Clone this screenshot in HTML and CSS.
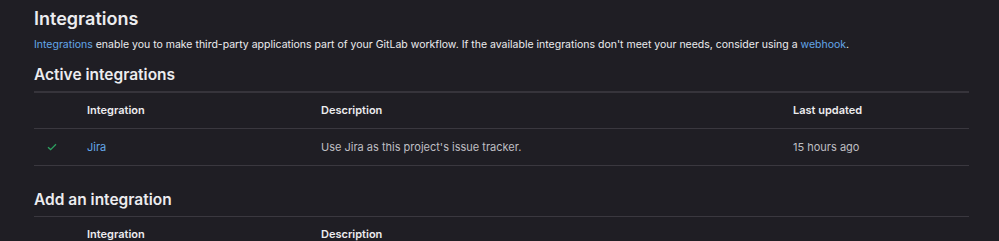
FILE: index.html
```html
<html>
<head>
    <title>Integrations</title>
    <link rel="stylesheet" href="styles.css">
</head>
<body>
    <h1 class="page-title">Integrations</h1>
    <p class="intro"><a href="#">Integrations</a> enable you to make third-party applications part of your GitLab workflow. If the available integrations don't meet your needs, consider using a <a href="#">webhook</a>.</p>

    <h2 class="section-title">Active integrations</h2>
    <table class="integrations first">
    <colgroup>
        <col class="col-icon">
        <col class="col-name">
        <col class="col-desc">
        <col>
    </colgroup>
    <thead>
    <tr>
        <th></th>
        <th>Integration</th>
        <th>Description</th>
        <th>Last updated</th>
    </tr>
    </thead>
    <tbody>
    <tr>
        <td class="status">
            <svg width="10" height="8" viewBox="0 0 10 8"><path d="M1 4.2 L3.6 6.6 L9 1.2" fill="none" stroke="#2da160" stroke-width="1.3"/></svg>
        </td>
        <td><a href="#">Jira</a></td>
        <td>Use Jira as this project's issue tracker.</td>
        <td>15 hours ago</td>
    </tr>
    </tbody>
    </table>

    <h2 class="section-title add">Add an integration</h2>
    <table class="integrations">
    <colgroup>
        <col class="col-icon">
        <col class="col-name">
        <col class="col-desc">
        <col>
    </colgroup>
    <thead>
    <tr>
        <th></th>
        <th>Integration</th>
        <th>Description</th>
        <th></th>
    </tr>
    </thead>
    </table>
</body>
</html>
```
FILE: styles.css
```css
body {
    margin: 0;
    padding: 0 30px 0 34px;
    background: #1f1e24;
    color: #ececef;
    font-family: Inter, "Noto Sans", sans-serif;
    overflow: hidden;
}

a {
    color: #63a6e9;
    text-decoration: none;
}

.page-title {
    margin: 8px 0 0;
    font-size: 18px;
    line-height: 22px;
    font-weight: 600;
}

.intro {
    margin: 7px 0 0;
    font-size: 10.5px;
    line-height: 16px;
    color: #ececef;
}

.section-title {
    margin: 12px 0 0;
    font-size: 15.5px;
    line-height: 20px;
    font-weight: 600;
}

.section-title.add {
    margin-top: 24px;
}

.integrations {
    width: 935px;
    margin-top: 6px;
    border-collapse: collapse;
    table-layout: fixed;
    border-top: 1px solid #3a383f;
}

.integrations.first {
    border-top: 2px solid #36343b;
}

.col-icon { width: 53px; }
.col-name { width: 234px; }
.col-desc { width: 472px; }

th, td {
    padding: 0;
    text-align: left;
    font-size: 11px;
    border-bottom: 1px solid #3a383f;
}

th {
    height: 36px;
    font-weight: 600;
    color: #ececef;
}

td {
    height: 37px;
    color: #bfbfc3;
}

td.status {
    padding-left: 13px;
}

td.status svg {
    display: block;
}
```
